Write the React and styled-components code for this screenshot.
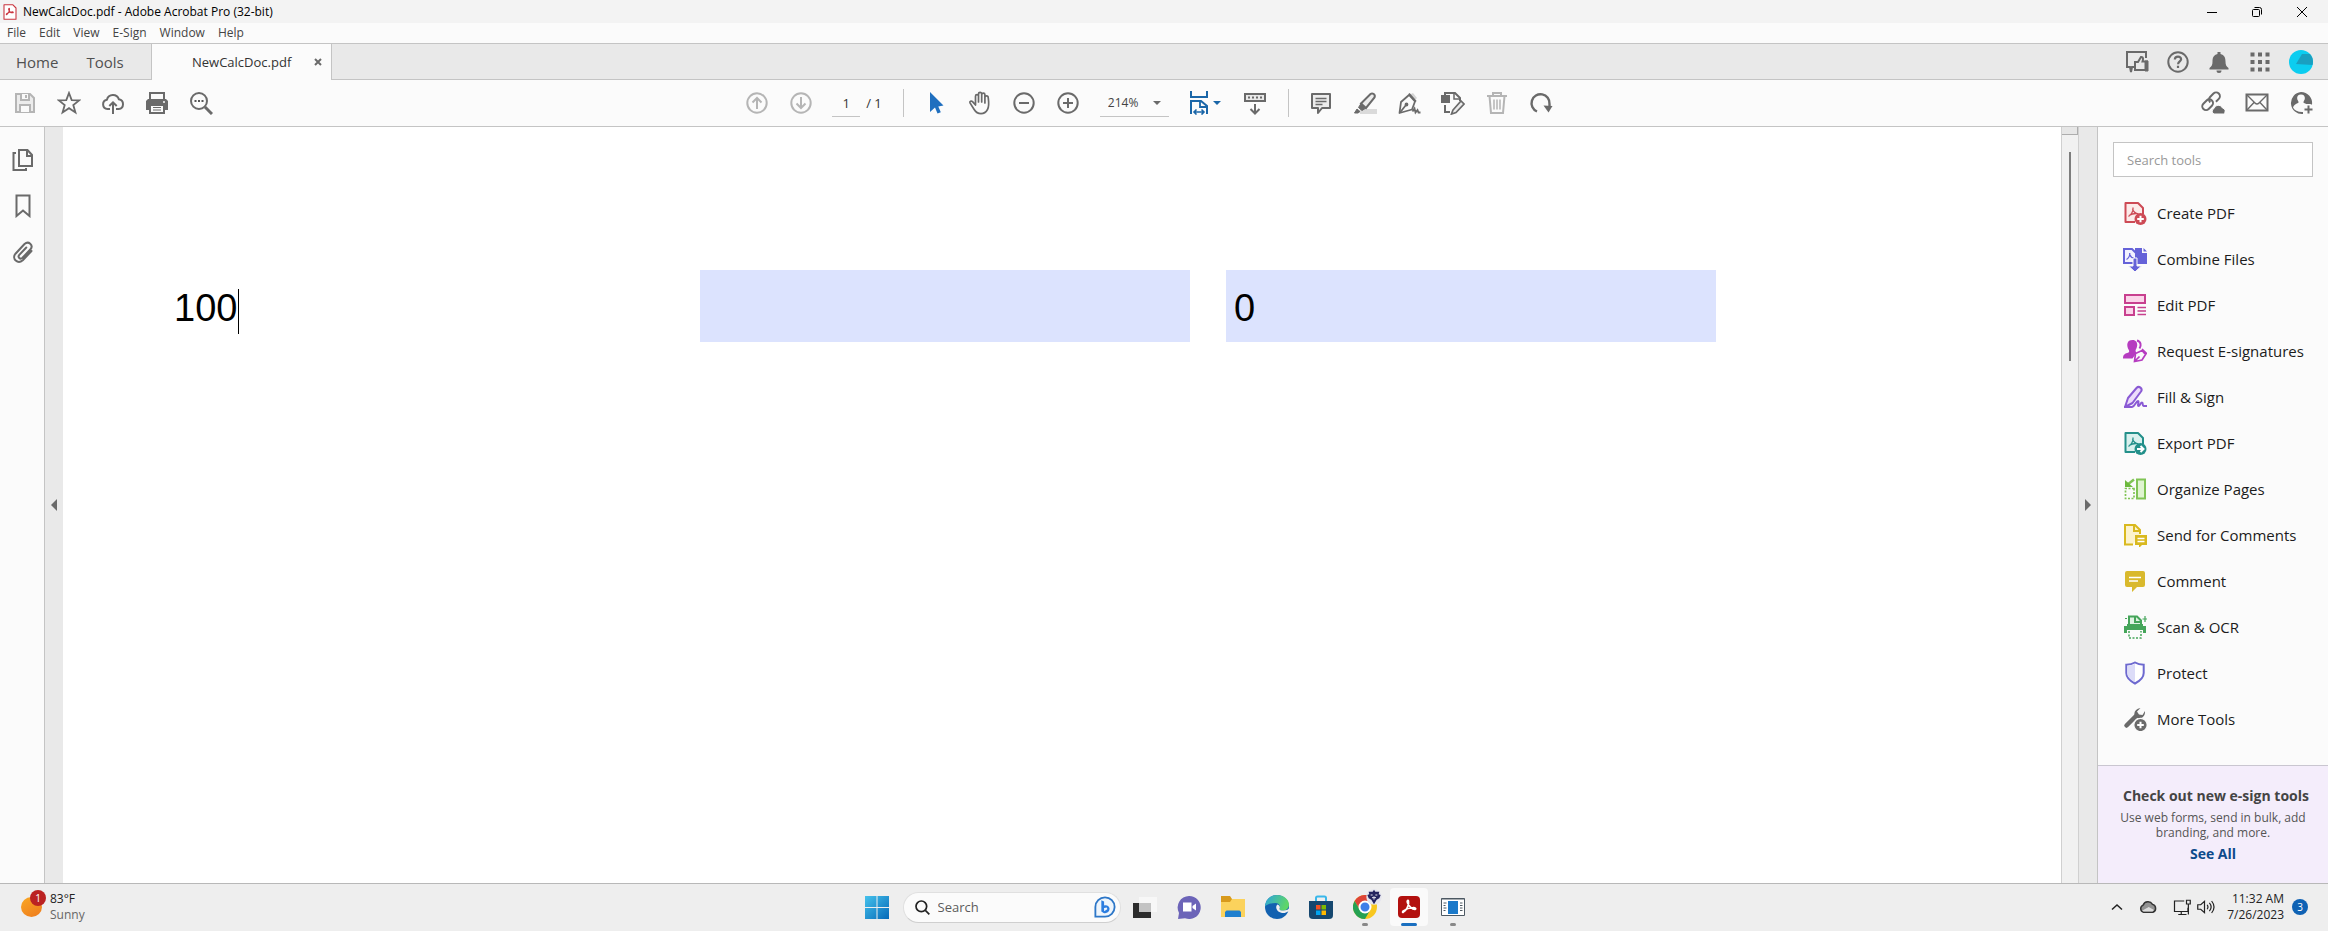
import { useState } from "react";
import styled, { createGlobalStyle } from "styled-components";

const GlobalStyle = createGlobalStyle`
  * {
    box-sizing: border-box;
  }
  body {
    margin: 0;
    font-family: "Open Sans", "Noto Sans", sans-serif;
    font-size: 12px;
    color: #222;
    background: #fff;
  }
  button, input, select {
    font-family: inherit;
    font-size: inherit;
    color: inherit;
  }
`;

/* ---------- icons ---------- */

const Svg = styled.svg`
  display: block;
  flex: none;
  width: ${(p) => p.$w || 24}px;
  height: ${(p) => p.$h || p.$w || 24}px;
  fill: none;
  stroke: ${(p) => p.$color || "#6a6a6a"};
  stroke-width: ${(p) => p.$line || 2};
`;

const Icon = ({ children, size, color, line, box = "0 0 24 24" }) => (
  <Svg $w={size} $color={color} $line={line} viewBox={box} aria-hidden="true">
    {children}
  </Svg>
);

const TREFOIL = "M7 16c2-1 4.600-5.500 4.300-8.500-.2-1.500-1.800-1-1.300.8.800 3 3.500 5 6 4.900 1.500-.2 1-1.700-.8-1.500-3 .2-5.700 1.300-7.800 2.600-1.400 1-.9 2-.4 1.700z";

const IconAppPdf = () => (
  <Icon size={16} color="#c9353f" line={1.6}>
    <path fill="#fff" d="M3 1h13l5 5v17H3z" strokeLinejoin="round" />
    <path d={TREFOIL} />
  </Icon>
);
const IconSave = () => (
  <Icon color="#b5b5b5">
    <path fill="#ececec" d="M3 3h14l4 4v14H3z" />
    <path fill="#fafafa" d="M8 3v6h8V3M7 21v-7h10v7" />
    <path d="M13 4v3" />
  </Icon>
);
const IconStar = () => (
  <Icon line={1.800}>
    <path d="M12 2l2.700 7.100 7.500.3-5.900 4.700 2.100 7.300L12 17.200l-6.400 4.200 2.100-7.300L1.800 9.400l7.500-.3z" />
  </Icon>
);
const IconCloudUp = () => (
  <Icon>
    <path d="M9 18H6.500a4.700 4.700 0 0 1-.6-9.300 6.300 6.300 0 0 1 12-.4A4.900 4.900 0 0 1 17.700 18H15" />
    <path d="M12 23V11.500M8.300 15L12 11.300l3.700 3.700" />
  </Icon>
);
const IconPrint = () => (
  <Icon>
    <path fill="#fafafa" d="M5 9V2h14v7" />
    <path fill="#6a6a6a" stroke="none" d="M3 8h18l2 2v9H1v-9z" />
    <path fill="#fafafa" d="M5 14h14v8H5z" />
    <path strokeWidth="1.200" d="M8 16.500h8M8 19h8" />
    <path stroke="#fafafa" strokeWidth="1.500" d="M18 11h2" />
  </Icon>
);
const IconFind = () => (
  <Icon>
    <circle cx="10" cy="10" r="8" />
    <path strokeWidth="3" d="M16 16l7 7" />
    <path stroke="#555" d="M5.500 10h2M9 10h2M12.500 10h2" />
  </Icon>
);
const IconCircle = ({ d, color }) => (
  <Icon color={color}>
    <circle cx="12" cy="12" r="9.700" />
    <path d={d} />
  </Icon>
);
const IconPointer = () => (
  <Icon>
    <path fill="#1f6fbf" stroke="none" d="M6 1v20l5-4.500 2.500 6 3.300-1.300-2.500-5.800 5.200-.9z" />
  </Icon>
);
const IconHand = () => (
  <Icon line={1.700}>
    <path
      strokeLinejoin="round"
      strokeLinecap="round"
      d="M7.500 14V5.200a1.500 1.500 0 0 1 3 0V11V3a1.500 1.500 0 0 1 3.200 0v8V3.800a1.500 1.500 0 0 1 3.200 0V12V6.500a1.500 1.500 0 0 1 3.300 0c.6 5 1.300 8.500-.7 12-1.800 3.300-4.200 4.200-6.500 4.200-3.500 0-5.500-2-7-4.500l-4-6.300c-.7-1.400 1.200-2.600 2.500-1.300z"
    />
  </Icon>
);
const IconFitWidth = () => (
  <Icon color="#1a66a8">
    <path d="M4 0v6h16V0" />
    <path d="M4 23V10h10l6 5v8" />
    <path d="M13 10v6h7" strokeWidth="1.800" />
    <path strokeWidth="1.600" d="M7 21h10M9.500 18.500L7 21l2.500 2.500M14.500 18.500L17 21l-2.500 2.500" />
  </Icon>
);
const IconKeyboardDown = () => (
  <Icon>
    <path fill="#e9e9e9" d="M2 3h20v7H2z" />
    <path strokeDasharray="2 2" d="M5 6.500h14" />
    <path d="M12 13v9M7.500 18l4.500 4.500 4.500-4.500" />
  </Icon>
);
const IconComment = () => (
  <Icon>
    <path fill="#ececec" d="M3 3h18v14h-8l-4 5v-5H3z" strokeLinejoin="round" />
    <path strokeWidth="1.600" d="M6.500 7.500h11M6.500 10.500h11M6.500 13.500h7" />
  </Icon>
);
const IconHighlight = () => (
  <Icon>
    <path stroke="#dadada" strokeWidth="5" d="M7 20.500h17" />
    <path fill="#ececec" d="M8 12.500L17.500 3c2-1.500 5.300.5 4 3.500l-8.500 10.500z" />
    <path fill="#6a6a6a" d="M8 12.500l5 4.500-4 2.500-3.500-3zM4 18l3 2.500-2 1.500H1.500z" strokeWidth="1" />
  </Icon>
);
const IconFountainPen = () => (
  <Icon line={1.800}>
    <path fill="#d5d5d5" stroke="none" d="M12 4l4-2 4 5-3 3z" />
    <path d="M12 4l6 6.500-3 8L2.500 22 4 11z" strokeLinejoin="round" />
    <path d="M3 21.500l6-7.500M12 2.500l7 8" />
    <circle cx="9.500" cy="13.500" r="1" />
    <path d="M15.500 20.500l2-3 1 4 2-2.500 1 2.500h2" />
  </Icon>
);
const IconEditDoc = () => (
  <Icon>
    <path fill="#6a6a6a" stroke="none" d="M0 4h9v8H0z" />
    <path d="M4 4V2h10l5 5v3M4 14v7h5" />
    <path d="M13 2v6h6" strokeWidth="1.500" />
    <path fill="#ececec" strokeWidth="1.700" d="M12 19l8-9 3 3-8 8.500-4.500 1.500z" />
  </Icon>
);
const IconTrash = () => (
  <Icon color="#b5b5b5">
    <path d="M2 5h20M8 5V2h8v3M4.500 5L6 22h12l1.500-17" fill="none" />
    <path strokeWidth="1.500" d="M9 8.500v10M12 8.500v10M15 8.500v10" />
  </Icon>
);
const IconRotate = () => (
  <Icon line={2.400}>
    <path d="M8 20.500A9 9 0 1 1 20.500 13v3" />
    <path fill="#6a6a6a" stroke="none" d="M14.500 14.500l9 .5-4 6.500z" />
  </Icon>
);
const IconShareLink = () => (
  <Icon>
    <g transform="rotate(-45 10 10)">
      <rect x="-1" y="6.500" width="12" height="7.500" rx="3.700" />
      <path d="M8.500 10.500v-.3a3.700 3.700 0 0 1 3.700-3.700h4.800a3.700 3.700 0 0 1 0 7.500h-4" />
    </g>
    <path fill="#6a6a6a" stroke="#fafafa" strokeWidth="1" d="M13 23a3 3 0 0 1 0-5.500 4.500 4.500 0 0 1 8.500-.5 3.200 3.200 0 0 1 1 6z" />
  </Icon>
);
const IconMail = () => (
  <Icon>
    <path d="M1.500 3.500h21v16h-21z" />
    <path strokeWidth="1.400" d="M2 4l8 8c1.300 1.300 2.700 1.300 4 0l8-8M2 19l7-7.500M22 19l-7-7.500" />
  </Icon>
);
const IconAddUser = () => (
  <Icon>
    <path fill="#6a6a6a" stroke="none" d="M12 1a11 11 0 0 1 11 12.500h-4.500l-3.500-1.500c-.8-.5-.6-1.300 0-2.200 1.600-2.500 1.200-6.300-3-6.300S7.400 7.300 9 9.800c.6.900.8 1.700 0 2.200-2.200 1-4.500 2-5 4.500 1.700 3 4.800 4.700 10 4.500v2A11 11 0 1 1 12 1z" />
    <path stroke="#fafafa" strokeWidth="4.500" d="M19.500 13v11M14.500 18.500h10" />
    <path d="M19.500 14.500v8M15.500 18.500h8" />
  </Icon>
);
const IconFeedback = () => (
  <Icon>
    <path d="M9 17H7l-1 5-1-5H2V2h19v6" />
    <path fill="#e9e9e9" d="M10 12h3l3-5c2.500-.3 2.300 2 1.500 4.500H22V20H10z" />
    <path fill="#6a6a6a" d="M20 11h3v10h-3z" strokeWidth="1" />
  </Icon>
);
const IconHelp = () => (
  <Icon>
    <circle cx="12" cy="12" r="9.700" />
    <path strokeWidth="2.200" d="M8.800 9.500c.2-4 6.500-3.600 6.300-.2-.2 2-3 2.200-3 4.900M12 15.700v2.200" />
  </Icon>
);
const IconBell = () => (
  <Icon>
    <path fill="#6a6a6a" stroke="none" d="M10.500 4V2h3v2c4 1 5 4 5 7.500 0 3.500.8 4.800 3 6.500v1.500h-19V18c2.200-1.700 3-3 3-6.500 0-3.500 1-6.500 5-7.500zM9.500 20.500h5a2.500 2.500 0 0 1-5 0z" />
  </Icon>
);
const IconGrid = () => (
  <Icon>
    <path strokeWidth="4" strokeDasharray="4 3.500" d="M2.500 4.500h19M2.500 12h19M2.500 19.500h19" />
  </Icon>
);
const IconAvatar = () => (
  <Icon>
    <circle cx="12" cy="12" r="12" fill="#0ccdf0" stroke="none" />
    <path fill="#1a9fc0" stroke="none" d="M7 14l6-10 8 0a12 12 0 0 1 2.500 11z" />
  </Icon>
);
const IconPages = () => (
  <Icon>
    <path fill="#fafafa" d="M8 2h8.500L21 7v11H8z" />
    <path d="M16 2v6h5M5 5H2.500v17H15v-2" />
  </Icon>
);
const IconBookmark = () => (
  <Icon>
    <path d="M5.500 1.500h13v20.500L12 16.500 5.500 22z" />
  </Icon>
);
const IconClip = () => (
  <Icon>
    <path
      strokeLinecap="round"
      d="M20.500 11l-8.700 9.200c-5 4.500-11.500-1.500-7.300-6.500L13.500 4c4-3.500 9.300 1 6 5.300l-8 8.500c-2.500 2-5.200-.5-3.200-3l7-7.300"
    />
  </Icon>
);

const PdfSheet = ({ color, tint, children }) => (
  <Icon color={color}>
    <path fill={tint} d="M12 21H2.500V2h12.500l5 5v6" strokeLinejoin="round" />
    <path strokeWidth="1.300" d="M5.500 15.500c3-1.500 5-6 4.500-9M9.500 8c1 3 3 4.500 6 5M6 14.500c2.500-1.500 4-2 7-2" />
    <circle cx="17.500" cy="18" r="6" fill={color} stroke="none" />
    {children}
  </Icon>
);
const IconCreate = () => (
  <PdfSheet color="#cd4a55" tint="#fcebea">
    <path stroke="#fff" d="M17.500 14.700v6.600M14.200 18h6.600" />
  </PdfSheet>
);
const IconExport = () => (
  <PdfSheet color="#23908a" tint="#d9f1ee">
    <path stroke="#fff" d="M14 18h6M17.500 15l3 3-3 3" />
  </PdfSheet>
);
const IconCombine = () => (
  <Icon color="#6562d8">
    <path fill="#6562d8" stroke="none" d="M12 1h7v5h5v11H12zM20.500 1L24 4.500h-3.500z" />
    <path fill="#f2f1ff" d="M1 2h8l4 4v10H1z" />
    <path strokeWidth="1.300" d="M3.500 12.500c2-1 3.500-4 3.200-6.500M6.700 7.500c1 2.500 2.300 3.500 4.300 3.500" />
    <path fill="#6562d8" stroke="#fafafa" strokeWidth="1" d="M10 11h4v8h4.500L12 25l-6.500-6H10z" />
  </Icon>
);
const IconEditPdf = () => (
  <Icon color="#c8408f">
    <path fill="#fbd5ea" d="M2 2h20v8H2zM2 14h9v8H2z" />
    <path strokeWidth="1.500" d="M14.500 14.500H23M14.500 18H23M14.500 21.500H23" />
  </Icon>
);
const IconRequest = () => (
  <Icon color="#b63cc0">
    <path fill="#b63cc0" stroke="none" d="M9.500 1c3.500 0 5 2.500 4.700 5.500-.2 2.500-1.700 4-1.700 5.500l1 2-4 5.500H0c0-4 2-5 5.500-6 1-.5.800-1.500.3-2.500C3 6 4 1 9.500 1z" />
    <path d="M14 1.500c4 1 4.500 5 2.500 8" />
    <path fill="#fafafa" strokeWidth="1.700" d="M11.500 22.500l1-8 6.500-3 3.500 4-3.500 5.500zM12 22l4.500-4.500M19 10l5 5" />
  </Icon>
);
const IconSign = () => (
  <Icon color="#8a5ad4">
    <path fill="#eddcfb" d="M2 22l3-9L13.500 3c2.500-2.700 6.500.5 4.500 3.500L9.500 18z" strokeLinejoin="round" />
    <path d="M1 22h8c3-.5 4-6 6-6 1.500 0-1 5 .5 5s2-3.500 3.500-3.500 0 3.500 1.500 3.500H24" />
  </Icon>
);
const IconOrganize = () => (
  <Icon color="#80c455">
    <path fill="#dff4d0" d="M14 2.500h8v19h-8z" />
    <path strokeWidth="1.700" strokeDasharray="2 1.500" d="M11 11.500H2.500v10H11z" />
    <path d="M11 2.500L4 8" strokeWidth="2.500" />
    <path fill="#6cb93d" stroke="none" d="M2 3v7h8z" />
  </Icon>
);
const IconSendComments = () => (
  <Icon color="#d9b91f">
    <path fill="#fcf3cd" d="M10 21.500H2V2h10l5 5v4" />
    <path d="M11 2v6h6" />
    <path fill="#d9b91f" stroke="none" d="M12 12h12v10h-5l-3 3v-3h-4z" />
    <path stroke="#fff" strokeWidth="1.300" d="M14.500 15.500h7M14.500 18.500h7" />
  </Icon>
);
const IconCommentTool = () => (
  <Icon color="#d9b92d">
    <path fill="#d9b92d" stroke="none" d="M4 2h16a2 2 0 0 1 2 2v12a2 2 0 0 1-2 2h-6l-5 5v-5H4a2 2 0 0 1-2-2V4a2 2 0 0 1 2-2z" />
    <path stroke="#fff" strokeWidth="1.600" d="M6 8.500h12M6 12h9" />
  </Icon>
);
const IconScan = () => (
  <Icon color="#45a55a">
    <path fill="#dff2e2" d="M6 9V1.500h8l4 4V9" />
    <path d="M12 2v5h5" />
    <path fill="#45a55a" stroke="none" d="M1 11h3V9h16v2h3v7h-3v-3H4v3H1z" />
    <path strokeWidth="1.500" strokeDasharray="2 1.500" d="M6 16v7h12v-7" />
    <path d="M2 3.500h2M22 1v6M19.500 4h5" strokeWidth="1.200" />
  </Icon>
);
const IconProtect = () => (
  <Icon color="#6d69cf">
    <path fill="#fff" d="M12 1.500c2.500 1.500 5.500 2.200 8.700 2.200V12c0 4.500-4 8-8.700 10.500C7.300 20 3.300 16.500 3.300 12V3.700c3.200 0 6.200-.7 8.700-2.200z" />
    <path fill="#dcdcf8" stroke="none" d="M12 2.700v18.600C8 19 4.300 16 4.300 12V4.700c2.700 0 5.200-.6 7.700-2z" />
  </Icon>
);
const IconMore = () => (
  <Icon color="#6a6a6a">
    <path strokeWidth="4.500" strokeLinecap="round" d="M3.500 18.500L13 9" />
    <path fill="#6a6a6a" stroke="none" d="M17.500 1L14 4.500l2 3 3.500.5L22 4c.5 5-3 8-7 7.200-5-1-5.500-9 2.500-10.200z" />
    <circle cx="17.500" cy="18" r="6.700" fill="#6a6a6a" stroke="#fafafa" strokeWidth="1.200" />
    <path stroke="#fff" d="M17.500 14.700v6.600M14.200 18h6.600" />
  </Icon>
);

/* taskbar */
const IconWindows = () => (
  <Icon>
    <defs>
      <linearGradient id="win" x1="0" y1="0" x2="1" y2="1">
        <stop offset="0" stopColor="#45c2ec" />
        <stop offset="1" stopColor="#0669b8" />
      </linearGradient>
    </defs>
    <path fill="url(#win)" stroke="none" d="M0 1h11.500v11H0zM12.500 1H24v11H12.500zM0 13h11.500v11H0zM12.500 13H24v11H12.500z" />
  </Icon>
);
const IconSearch = () => (
  <Icon size={16} color="#222" line={2.600}>
    <circle cx="11" cy="11" r="8" />
    <path d="M17 17l6 6" />
  </Icon>
);
const IconBing = () => (
  <Icon size={22} color="#2d77c8">
    <path fill="#eef5fc" d="M1.500 22.500V12A10.500 10.500 0 1 1 12 22.500z" />
    <path fill="#2b7de0" stroke="none" d="M8 4.500l3 1.500v4.300c3-1 6 1 6 3.700 0 3.500-3.500 5.500-6.500 4.500L8 17z" />
    <path fill="#eef5fc" stroke="none" d="M11 13l3-.5.500 2L11 16.500z" />
  </Icon>
);
const IconTaskView = () => (
  <Icon>
    <path fill="#f7f7f7" stroke="none" d="M6 2h18v15H6z" />
    <path fill="#2c2c2c" stroke="none" d="M0 8h18v15H0z" />
    <path fill="#c3c3c3" stroke="none" d="M6 8h12v9H6z" />
  </Icon>
);
const IconChat = () => (
  <Icon>
    <path fill="#6c64b8" stroke="none" d="M12 1a11.500 11.500 0 1 1-4 22.200L1 24l1-6A11.500 11.500 0 0 1 12 1z" />
    <path fill="#fff" stroke="none" d="M6 7.500h8.500v9H6zM15.500 11l3.500-2.500v7L15.500 13z" />
  </Icon>
);
const IconFolder = () => (
  <Icon>
    <path fill="#d89a1c" stroke="none" d="M0 1h9l2 3v4H0z" />
    <path fill="#fbd25c" stroke="none" d="M0 7h9l2-3h13v18H0z" />
    <path fill="#1e7fcf" stroke="none" d="M4 22v-5l1.500-1.500h13L20 17v5z" />
  </Icon>
);
const IconEdge = () => (
  <Icon>
    <defs>
      <linearGradient id="edge" x1="0" y1="0" x2="1" y2="0.3">
        <stop offset="0" stopColor="#2ba5df" />
        <stop offset="1" stopColor="#5fd668" />
      </linearGradient>
    </defs>
    <circle cx="12" cy="12" r="12" fill="#1261b0" stroke="none" />
    <path fill="url(#edge)" stroke="none" d="M0 11.500C.5 4.500 5.500 0 12 0c7 0 12 5 12 9.500 0 4-3 6-6 6-2.500 0-4-1-3.500-2 1.500-3-1-5.500-4-5.500C5 8 1 10 0 11.500z" />
    <path fill="#f0f0f0" stroke="none" d="M12.500 9.500c-2.500 2-1.500 7.500 4.500 8.500 3 .3 5-1 5.500-1.300l2-.7v-3c-1.500 2-4 2.700-6.500 2.500-2.500 0-4-1-3.500-2 .8-1.500.2-3.200-2-4z" />
  </Icon>
);
const IconStore = () => (
  <Icon>
    <path stroke="#3ab7ea" d="M7 6V3c0-1 .5-1.500 1.500-1.500h7C16.500 1.500 17 2 17 3v3" />
    <path fill="#15476f" stroke="none" d="M0 6h24v14c0 2.500-1 4-4 4H4c-3 0-4-1.500-4-4z" />
    <path fill="#f25022" stroke="none" d="M7 10h4.500v4.500H7z" />
    <path fill="#7fba00" stroke="none" d="M12.500 10H17v4.500h-4.500z" />
    <path fill="#00a4ef" stroke="none" d="M7 15.500h4.500V20H7z" />
    <path fill="#ffb900" stroke="none" d="M12.500 15.500H17V20h-4.500z" />
  </Icon>
);
const IconChrome = () => (
  <Icon>
    <circle cx="12" cy="12" r="12" fill="#f8c71f" stroke="none" />
    <path fill="#dd4437" stroke="none" d="M1.600 6A12 12 0 0 1 22.400 6H12L7 15z" />
    <path fill="#25a153" stroke="none" d="M1.600 6A12 12 0 0 0 12 24l5.200-9L7 15z" />
    <circle cx="12" cy="12" r="5.500" fill="#3f7ee8" stroke="#fff" />
  </Icon>
);
const IconProfile = () => (
  <Icon size={16}>
    <circle cx="12" cy="12" r="11.500" fill="#e4e4ee" stroke="none" />
    <path fill="#23235f" stroke="none" d="M12 1l2 3h6l-1 4 3 1-2 5-4 2-4 7-4-7-4-2-2-5 3-1-1-4h6z" />
    <path stroke="#e4e4ee" strokeWidth="1.500" d="M7 9h3M14 9h3M12 11v5M9 13h6" />
  </Icon>
);
const IconAcrobat = () => (
  <Icon>
    <rect x="1" y="1" width="22" height="22" rx="4" fill="#b3110f" stroke="none" />
    <path stroke="#fff" strokeWidth="1.700" d="M6 17.500c3-1 6.500-8 5.500-11.500-.7-1.500-1.800 0-1 1.800C12 11 14.500 14 18 14.500c1.500-.5.5-2-2-1.800-3.500.1-7 1.300-9.700 3.200-1 .8-.8 1.500-.3 1.600z" />
  </Icon>
);
const IconWindowApp = () => (
  <Icon color="#4d5963">
    <path fill="#fff" strokeWidth="1" d="M.5 3.500h23v17H.5z" />
    <path strokeWidth="1" d="M.5 4h23" />
    <path fill="#1b79c9" stroke="none" d="M7 6h10v13H7z" />
    <path strokeWidth="1" d="M2.500 8h3M2.500 10.500h2M2.500 13h3M2.500 15.500h2M19 8h2.500M19 10.500h2.500M19 13h2.500M19 15.500h2.500" />
  </Icon>
);
const IconCloud = () => (
  <Icon size={18} color="#333" line={2}>
    <path fill="#929292" d="M6 19a5 5 0 0 1-.5-9.500A7 7 0 0 1 18 8.500a5.500 5.500 0 0 1 .5 10.500z" />
    <path fill="#dcdcdc" stroke="none" d="M4 17l9-5 7 4-2 2H6z" />
  </Icon>
);
const IconNetwork = () => (
  <Icon size={18} color="#222" line={1.600}>
    <path d="M15 4H2v14h18v-5M7 22h11M11 18v4" />
    <path d="M18 3h5v5h-5zM20.500 8v14" />
  </Icon>
);
const IconSpeaker = () => (
  <Icon size={18} color="#222" line={1.600}>
    <path d="M1 9h4l5-4.500v15L5 15H1zM13.500 9c1.500 2 1.500 4 0 6M16.500 6.500c3 3.500 3 7.500 0 11M19.500 4c4 5 4 11 0 16" />
  </Icon>
);

/* ---------- layout parts ---------- */

const Window = styled.div`
  display: flex;
  flex-direction: column;
  min-height: 100vh;
`;

const TitleBar = styled.header`
  display: flex;
  align-items: center;
  height: 23px;
  padding: 0 4px 0 2px;
  background: #f3f3f3;
  color: #000;
`;

const Title = styled.span`
  flex: 1;
  margin-left: 5px;
  font-size: 12px;
  line-height: 16px;
`;

const IconButton = styled.button`
  display: flex;
  align-items: center;
  justify-content: center;
  flex: none;
  width: ${(p) => p.$w || 44}px;
  height: ${(p) => p.$h || 40}px;
  padding: 0;
  border: 0;
  background: none;
`;

const MenuBar = styled.nav`
  display: flex;
  align-items: center;
  gap: 13px;
  height: 21px;
  padding: 0 7px;
  border-bottom: 1px solid #c4c4c4;
  background: #fbfbfb;
`;

const MenuItem = styled.button`
  padding: 0;
  border: 0;
  background: none;
  color: #444;
  font-size: 12px;
  line-height: 16px;
`;

const TabBar = styled.div`
  display: flex;
  height: 36px;
  background: #e9e9e9;
  border-bottom: 1px solid #c4c4c4;
`;

const HomeTabs = styled.div`
  display: flex;
  align-items: center;
  gap: 28px;
  width: 152px;
  padding-left: 16px;
  border-right: 1px solid #c4c4c4;
`;

const Tab = styled.button`
  padding: 0;
  border: 0;
  background: none;
  color: #505050;
  font-size: 15px;
  line-height: 20px;
`;

const DocTab = styled.div`
  display: flex;
  align-items: center;
  justify-content: space-between;
  width: 180px;
  margin-bottom: -1px;
  padding: 0 8px 0 40px;
  border-right: 1px solid #c4c4c4;
  background: #fbfbfb;
`;

const DocTabName = styled.button`
  padding: 0;
  border: 0;
  background: none;
  color: #333;
  font-size: 13px;
`;

const TabActions = styled.div`
  display: flex;
  align-items: center;
  margin-left: auto;
  padding-right: 7px;
`;

const Toolbar = styled.div`
  display: flex;
  align-items: center;
  height: 47px;
  padding: 0 5px 0 3px;
  border-bottom: 1px solid #c4c4c4;
  background: #fbfbfb;
`;

const ToolSide = styled.div`
  display: flex;
  flex: 1;
  justify-content: ${(p) => (p.$end ? "flex-end" : "flex-start")};
`;

const ToolMiddle = styled.div`
  display: flex;
  align-items: center;
  padding-right: 28px;
`;

const Divider = styled.span`
  width: 1px;
  height: 28px;
  margin: 0 ${(p) => p.$right}px 0 ${(p) => p.$left}px;
  background: #c4c4c4;
`;

const PageField = styled.label`
  display: flex;
  align-items: center;
  gap: 6px;
  margin-left: 9px;
  font-size: 13px;
  color: #333;
`;

const PageInput = styled.input`
  width: 28px;
  height: 28px;
  padding: 0;
  border: 0;
  border-bottom: 1px solid #c4c4c4;
  background: none;
  text-align: center;
  outline: 0;
`;

const ZoomField = styled.label`
  display: flex;
  align-items: center;
  width: 69px;
  height: 28px;
  margin: 0 13px 0 10px;
  padding-right: 8px;
  border-bottom: 1px solid #c4c4c4;
`;

const ZoomSelect = styled.select`
  flex: 1;
  min-width: 0;
  padding: 0 0 0 8px;
  border: 0;
  background: none;
  appearance: none;
  color: #444;
  font-size: 12px;
`;

const DownArrow = styled.span`
  border: 4px solid transparent;
  border-top: 4px solid ${(p) => p.$color || "#6a6a6a"};
  border-bottom: 0;
`;

const Workspace = styled.div`
  display: flex;
  flex: 1;
`;

const Rail = styled.nav`
  display: flex;
  flex-direction: column;
  width: 45px;
  padding: 10px 0 0 1px;
  border-right: 1px solid #c4c4c4;
  background: #fbfbfb;
`;

const Gutter = styled.button`
  display: flex;
  align-items: center;
  justify-content: center;
  width: 18px;
  padding: 0;
  border: 0;
  background: #e9e9e9;
`;

const SideArrow = styled.span`
  border: 6px solid transparent;
  border-${(p) => (p.$left ? "right" : "left")}-color: #6a6a6a;
  border-${(p) => (p.$left ? "left" : "right")}: 0;
`;

const Page = styled.main`
  flex: 1;
  padding: 143px 0 0 103px;
  background: #fff;
`;

const FieldRow = styled.div`
  display: flex;
  gap: 36px;
`;

const Field = styled.label`
  position: relative;
  width: 490px;
  height: 72px;
  margin-right: ${(p) => (p.$active ? 8 : 0)}px;
  background: ${(p) => (p.$active ? "#fff" : "#dce3fe")};
  font-family: "Liberation Sans", Arial, sans-serif;
  font-size: 38px;
`;

const FieldInput = styled.input`
  width: 100%;
  height: 100%;
  padding: 4px 8px 0;
  border: 0;
  outline: 0;
  background: none;
  color: #000;
`;

const Caret = styled.span`
  position: absolute;
  top: 19px;
  left: calc(9px + 3ch);
  width: 1px;
  height: 45px;
  background: #000;
`;

const ScrollTrack = styled.div`
  display: flex;
  flex-direction: column;
  align-items: center;
  width: 18px;
  border: 1px solid #d0d0d0;
  border-width: 0 1px;
  background: #f1f1f1;
`;

const SplitBox = styled.span`
  align-self: stretch;
  height: 8px;
  margin-bottom: 17px;
  border: 1px solid #adadad;
  border-width: 0 1px 1px 0;
  background: #e6e6e6;
`;

const ScrollThumb = styled.span`
  width: 2px;
  height: 209px;
  background: #7d7d7d;
`;

const Panel = styled.aside`
  display: flex;
  flex-direction: column;
  width: 231px;
  border-left: 1px solid #c4c4c4;
  background: #fbfbfb;
`;

const ToolSearch = styled.input`
  height: 35px;
  margin: 15px 15px 12px;
  padding: 0 13px;
  border: 1px solid #c4c4c4;
  background: #fff;
  font-size: 13px;
  outline: 0;
  &::placeholder {
    color: #999;
    opacity: 1;
  }
`;

const ToolList = styled.ul`
  flex: 1;
  margin: 0;
  padding: 0;
  list-style: none;
`;

const ToolItem = styled.button`
  display: flex;
  align-items: center;
  gap: 10px;
  width: 100%;
  height: 46px;
  padding: 2px 0 0 25px;
  border: 0;
  background: none;
  color: #1c1c1c;
  font-size: 15px;
  line-height: 20px;
  white-space: nowrap;
`;

const Promo = styled.section`
  height: 118px;
  padding: 20px 8px 0;
  border-top: 1px solid #c9c6d0;
  background: #f4edfb;
  text-align: center;
`;

const PromoTitle = styled.h2`
  margin: 0 0 4px;
  padding-left: 6px;
  font-size: 14px;
  line-height: 20px;
  color: #444;
  white-space: nowrap;
`;

const PromoText = styled.p`
  margin: 0 0 4px;
  font-size: 12px;
  line-height: 15px;
  color: #555;
`;

const PromoLink = styled.a`
  font-size: 14px;
  line-height: 20px;
  font-weight: 700;
  color: #0d4a8b;
  text-decoration: none;
`;

const Taskbar = styled.footer`
  display: grid;
  grid-template-columns: 1fr auto 1fr;
  align-items: center;
  height: 48px;
  padding-bottom: 1px;
  border-top: 1px solid #b8b8b8;
  background: #eee;
`;

const Weather = styled.button`
  display: flex;
  align-items: center;
  gap: 8px;
  justify-self: start;
  padding: 0 0 0 21px;
  border: 0;
  background: none;
  text-align: left;
  line-height: 16px;
  color: #222;
`;

const Sun = styled.span`
  position: relative;
  width: 21px;
  height: 20px;
  border-radius: 50%;
  background: linear-gradient(150deg, #f9a825, #ee7a1d);
`;

const Badge = styled.span`
  display: flex;
  align-items: center;
  justify-content: center;
  width: 16px;
  height: 16px;
  border-radius: 50%;
  background: #0f62b4;
  color: #fff;
  font-size: 10px;
`;

const SunBadge = styled(Badge)`
  position: absolute;
  top: -7px;
  right: -4px;
  background: #bb2222;
`;

const Muted = styled.span`
  display: block;
  color: #666;
`;

const Apps = styled.div`
  display: flex;
  align-items: center;
  padding-left: 1px;
`;

const AppButton = styled.button`
  position: relative;
  display: flex;
  align-items: center;
  justify-content: center;
  width: ${(p) => (p.$active ? 38 : 44)}px;
  height: 38px;
  margin: 0 ${(p) => (p.$active ? 3 : 0)}px;
  padding: 0;
  border: 0;
  border-radius: 4px;
  background: ${(p) => (p.$active ? "#fafafa" : "none")};
`;

const RunMark = styled.span`
  position: absolute;
  bottom: 0;
  width: ${(p) => (p.$active ? 16 : 6)}px;
  height: 3px;
  border-radius: 2px;
  background: ${(p) => (p.$active ? "#1a6fc0" : "#888")};
`;

const ProfileMark = styled.span`
  position: absolute;
  top: 1px;
  right: 5px;
`;

const SearchPill = styled.label`
  display: flex;
  align-items: center;
  width: 218px;
  height: 31px;
  margin: 0 2px 0 4px;
  padding: 0 4px 0 10px;
  border: 1px solid #e0e0e0;
  border-bottom-color: #cfcfcf;
  border-radius: 16px;
  background: #fbfbfb;
`;

const SearchInput = styled.input`
  flex: 1;
  min-width: 0;
  padding: 0 8px;
  border: 0;
  background: none;
  font-size: 13px;
  outline: 0;
  &::placeholder {
    color: #5c5c5c;
    opacity: 1;
  }
`;

const Tray = styled.div`
  display: flex;
  align-items: center;
  justify-self: end;
  gap: 8px;
  padding-right: 20px;
`;

const TrayGroup = styled.div`
  display: flex;
  align-items: center;
  gap: ${(p) => p.$gap}px;
`;

const Clock = styled.div`
  width: 61px;
  text-align: right;
  line-height: 16px;
  color: #222;
`;

/* ---------- data ---------- */

const menus = ["File", "Edit", "View", "E-Sign", "Window", "Help"];

const tools = [
  ["Create PDF", IconCreate],
  ["Combine Files", IconCombine],
  ["Edit PDF", IconEditPdf],
  ["Request E-signatures", IconRequest],
  ["Fill & Sign", IconSign],
  ["Export PDF", IconExport],
  ["Organize Pages", IconOrganize],
  ["Send for Comments", IconSendComments],
  ["Comment", IconCommentTool],
  ["Scan & OCR", IconScan],
  ["Protect", IconProtect],
  ["More Tools", IconMore],
];

const leftTools = [
  ["Save", IconSave],
  ["Star", IconStar],
  ["Upload", IconCloudUp],
  ["Print", IconPrint],
  ["Find", IconFind],
];

const editTools = [
  ["Add comment", IconComment],
  ["Highlight", IconHighlight],
  ["Sign", IconFountainPen],
  ["Edit", IconEditDoc],
  ["Delete", IconTrash],
  ["Rotate", IconRotate],
];

const shareTools = [
  ["Share link", IconShareLink],
  ["Email", IconMail],
  ["Add people", IconAddUser],
];

const tabTools = [
  ["Feedback", IconFeedback],
  ["Help center", IconHelp],
  ["Notifications", IconBell],
  ["Apps", IconGrid],
  ["Account", IconAvatar],
];

const railTools = [
  ["Page thumbnails", IconPages],
  ["Bookmarks", IconBookmark],
  ["Attachments", IconClip],
];

const apps = [
  { name: "Task view", icon: IconTaskView },
  { name: "Chat", icon: IconChat },
  { name: "File Explorer", icon: IconFolder },
  { name: "Edge", icon: IconEdge },
  { name: "Store", icon: IconStore },
  { name: "Chrome", icon: IconChrome, running: true, profile: true },
  { name: "Acrobat", icon: IconAcrobat, running: true, active: true },
  { name: "Window", icon: IconWindowApp, running: true },
];

const ToolButtons = ({ items, w, h }) =>
  items.map(([name, Glyph]) => (
    <IconButton key={name} type="button" aria-label={name} $w={w} $h={h}>
      <Glyph />
    </IconButton>
  ));

const App = () => {
  const [first, setFirst] = useState("100");
  const [second, setSecond] = useState("");
  const [page, setPage] = useState("1");
  const total = Number(second) || 0;

  return (
    <Window>
      <GlobalStyle />
      <TitleBar>
        <IconAppPdf />
        <Title>NewCalcDoc.pdf - Adobe Acrobat Pro (32-bit)</Title>
        <IconButton type="button" aria-label="Minimize" $w={45} $h={22}>
          <Icon size={12} color="#000" line={1} box="0 0 12 12">
            <path d="M1 6.500h10" />
          </Icon>
        </IconButton>
        <IconButton type="button" aria-label="Restore" $w={45} $h={22}>
          <Icon size={12} color="#000" line={1} box="0 0 12 12">
            <rect x="1.500" y="3.500" width="7" height="7" rx="1" />
            <path d="M3.500 1.500h5a2 2 0 0 1 2 2v5" />
          </Icon>
        </IconButton>
        <IconButton type="button" aria-label="Close" $w={45} $h={22}>
          <Icon size={12} color="#000" line={1} box="0 0 12 12">
            <path d="M1 1l10 10M11 1L1 11" />
          </Icon>
        </IconButton>
      </TitleBar>

      <MenuBar>
        {menus.map((m) => (
          <MenuItem key={m} type="button">
            {m}
          </MenuItem>
        ))}
      </MenuBar>

      <TabBar>
        <HomeTabs>
          <Tab type="button">Home</Tab>
          <Tab type="button">Tools</Tab>
        </HomeTabs>
        <DocTab>
          <DocTabName type="button">NewCalcDoc.pdf</DocTabName>
          <IconButton type="button" aria-label="Close tab" $w={10} $h={20}>
            <Icon size={8} line={2} box="0 0 8 8">
              <path d="M1 1l6 6M7 1L1 7" />
            </Icon>
          </IconButton>
        </DocTab>
        <TabActions>
          <ToolButtons items={tabTools} w={41} h={34} />
        </TabActions>
      </TabBar>

      <Toolbar>
        <ToolSide>
          <ToolButtons items={leftTools} />
        </ToolSide>
        <ToolMiddle>
          <IconButton type="button" aria-label="Previous page">
            <IconCircle color="#b5b5b5" d="M12 18V7M7.500 11.500L12 7l4.500 4.500" />
          </IconButton>
          <IconButton type="button" aria-label="Next page">
            <IconCircle color="#b5b5b5" d="M12 6v11M7.500 12.500L12 17l4.500-4.500" />
          </IconButton>
          <PageField>
            <PageInput aria-label="Page" value={page} onChange={(e) => setPage(e.target.value)} />
            <span>/ 1</span>
          </PageField>
          <Divider $left={21} $right={10} />
          <IconButton type="button" aria-label="Select">
            <IconPointer />
          </IconButton>
          <IconButton type="button" aria-label="Pan">
            <IconHand />
          </IconButton>
          <IconButton type="button" aria-label="Zoom out">
            <IconCircle d="M7 12h10" />
          </IconButton>
          <IconButton type="button" aria-label="Zoom in">
            <IconCircle d="M7 12h10M12 7v10" />
          </IconButton>
          <ZoomField>
            <ZoomSelect aria-label="Zoom level" defaultValue="214">
              <option value="214">214%</option>
              <option value="100">100%</option>
            </ZoomSelect>
            <DownArrow />
          </ZoomField>
          <IconButton type="button" aria-label="Fit width">
            <TrayGroup $gap={2}>
              <IconFitWidth />
              <DownArrow $color="#1a66a8" />
            </TrayGroup>
          </IconButton>
          <IconButton type="button" aria-label="Read mode" $w={58}>
            <IconKeyboardDown />
          </IconButton>
          <Divider $left={4} $right={10} />
          <ToolButtons items={editTools} />
        </ToolMiddle>
        <ToolSide $end>
          <ToolButtons items={shareTools} />
        </ToolSide>
      </Toolbar>

      <Workspace>
        <Rail>
          <ToolButtons items={railTools} h={46} />
        </Rail>
        <Gutter type="button" aria-label="Expand left pane">
          <SideArrow $left />
        </Gutter>
        <Page>
          <FieldRow>
            <Field $active>
              <FieldInput aria-label="First value" value={first} onChange={(e) => setFirst(e.target.value)} />
              <Caret />
            </Field>
            <Field>
              <FieldInput aria-label="Second value" value={second} onChange={(e) => setSecond(e.target.value)} />
            </Field>
            <Field>
              <FieldInput aria-label="Result" value={total} readOnly />
            </Field>
          </FieldRow>
        </Page>
        <ScrollTrack>
          <SplitBox />
          <ScrollThumb />
        </ScrollTrack>
        <Gutter type="button" aria-label="Collapse right pane">
          <SideArrow />
        </Gutter>
        <Panel>
          <ToolSearch aria-label="Search tools" placeholder="Search tools" />
          <ToolList>
            {tools.map(([name, Glyph]) => (
              <li key={name}>
                <ToolItem type="button">
                  <Glyph />
                  {name}
                </ToolItem>
              </li>
            ))}
          </ToolList>
          <Promo>
            <PromoTitle>Check out new e-sign tools</PromoTitle>
            <PromoText>Use web forms, send in bulk, add branding, and more.</PromoText>
            <PromoLink href="#see-all">See All</PromoLink>
          </Promo>
        </Panel>
      </Workspace>

      <Taskbar>
        <Weather type="button">
          <Sun>
            <SunBadge>1</SunBadge>
          </Sun>
          <span>
            83°F
            <Muted>Sunny</Muted>
          </span>
        </Weather>
        <Apps>
          <AppButton type="button" aria-label="Start">
            <IconWindows />
          </AppButton>
          <SearchPill>
            <IconSearch />
            <SearchInput aria-label="Search" placeholder="Search" />
            <IconBing />
          </SearchPill>
          {apps.map(({ name, icon: Glyph, running, active, profile }) => (
            <AppButton key={name} type="button" aria-label={name} $active={active}>
              <Glyph />
              {profile && (
                <ProfileMark>
                  <IconProfile />
                </ProfileMark>
              )}
              {running && <RunMark $active={active} />}
            </AppButton>
          ))}
        </Apps>
        <Tray>
          <TrayGroup $gap={16}>
            <Icon size={12} color="#222" line={1.500} box="0 0 12 12">
              <path d="M1 8.500L6 4l5 4.500" />
            </Icon>
            <IconCloud />
            <TrayGroup $gap={6}>
              <IconNetwork />
              <IconSpeaker />
            </TrayGroup>
          </TrayGroup>
          <Clock>
            11:32 AM
            <br />
            7/26/2023
          </Clock>
          <Badge>3</Badge>
        </Tray>
      </Taskbar>
    </Window>
  );
};

export default App;
